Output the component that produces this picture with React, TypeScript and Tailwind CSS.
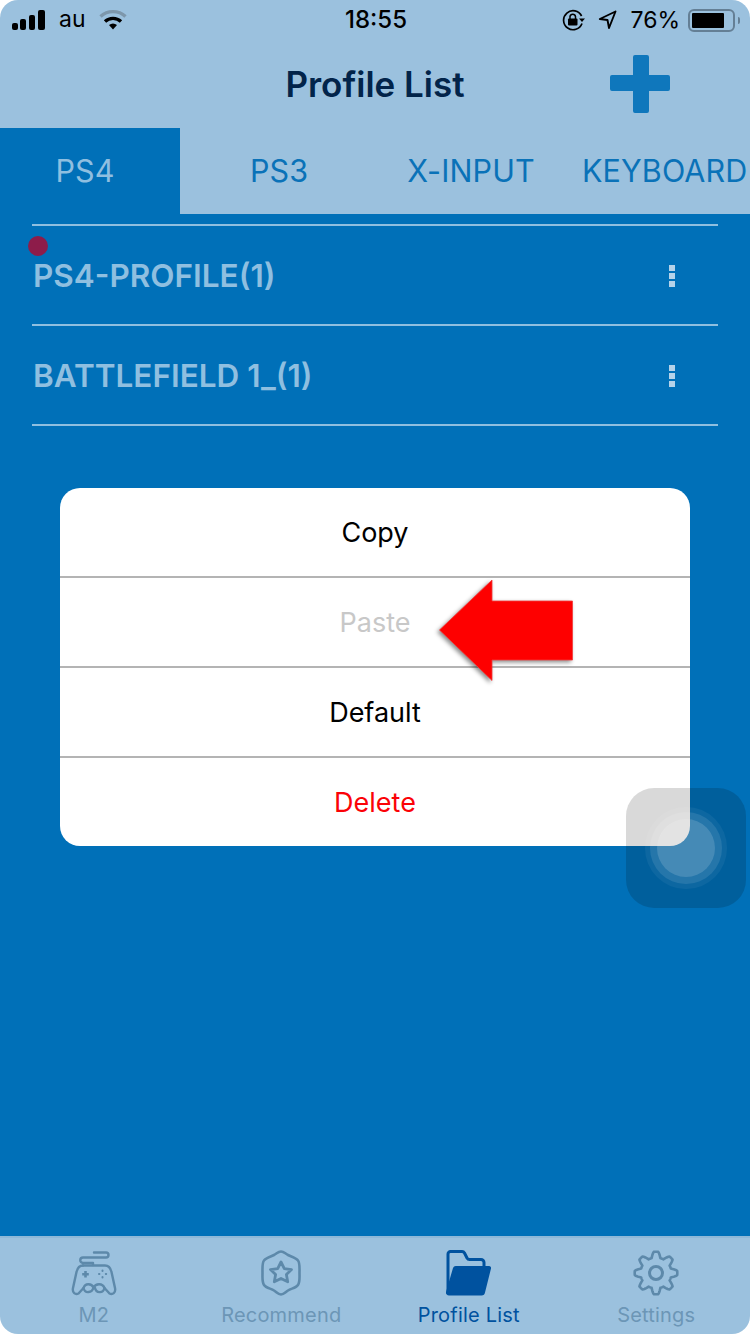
const profiles = ["PS4-PROFILE(1)", "BATTLEFIELD 1_(1)"];

const menu = [
  { label: "Copy", tone: "text-black", size: "h-[90px] border-b-2 border-[#b4b4b4]" },
  { label: "Paste", tone: "text-[#c8c8c8]", size: "h-[90px] border-b-2 border-[#b4b4b4]" },
  { label: "Default", tone: "text-black", size: "h-[90px] border-b-2 border-[#b4b4b4]" },
  { label: "Delete", tone: "text-[#fb0207]", size: "h-[88px]" },
];

// 8 rounded teeth round the settings cog
const gearPath = (() => {
  const points: string[] = [];
  for (let i = 0; i < 240; i++) {
    const a = (i / 240) * Math.PI * 2;
    const wave = Math.max(-1, Math.min(1, Math.cos(a * 8) * 1.5));
    const r = 18.4 + wave * 2.9;
    points.push(`${(23 + r * Math.sin(a)).toFixed(2)} ${(23 - r * Math.cos(a)).toFixed(2)}`);
  }
  return `M${points.join(" L")} Z`;
})();

function StatusBar() {
  return (
    <div className="grid h-10 grid-cols-3 items-center pl-3 pr-[10px] text-[23px] leading-none text-black">
      <div className="flex items-center">
        <svg width="34" height="21" viewBox="0 0 34 21" fill="currentColor">
          <rect x="0" y="13" width="6" height="7" rx="2" />
          <rect x="8" y="9" width="6" height="11" rx="2" />
          <rect x="17" y="5" width="6" height="15" rx="2" />
          <rect x="26" y="0" width="7" height="20" rx="2" />
        </svg>
        <span className="ml-[13px] -mt-[1px]">au</span>
        <svg className="ml-[13px]" width="28" height="22" viewBox="0 0 28 22" fill="none">
          <path d="M1.5 7.5 C8.5 1 19.5 1 26.5 7.5" stroke="#7d97ab" strokeWidth="3.4" />
          <path d="M6 12.5 C10.5 8.3 17.5 8.3 22 12.5" stroke="#000" strokeWidth="3.4" />
          <path d="M10 16 C12.5 14 15.5 14 18 16 L14 20.5 Z" fill="#000" />
        </svg>
      </div>
      <div className="text-center text-[24px] font-medium">18:55</div>
      <div className="flex items-center justify-end">
        <svg width="23" height="22" viewBox="0 0 23 22" fill="none">
          <path d="M20 14.5 A9.5 9.5 0 1 1 19.6 7" stroke="#000" strokeWidth="1.7" />
          <path d="M17 9.5 L23 9.5 L20 13 Z" fill="#000" />
          <rect x="6" y="9.5" width="9.5" height="7" rx="1" fill="#000" />
          <path d="M8 10 V7.5 A2.8 2.8 0 0 1 13.5 7.5 V10" stroke="#000" strokeWidth="1.5" />
        </svg>
        <svg className="ml-[13px]" width="19" height="20" viewBox="0 0 19 20" fill="none">
          <path d="M17.5 1.5 L1.8 9 L9.5 10 L11 18 Z" stroke="#000" strokeWidth="1.9" strokeLinejoin="round" />
        </svg>
        <span className="ml-[13px]">76%</span>
        <div className="ml-2 flex items-center">
          <div className="h-[23px] w-[47px] rounded-[6px] border-2 border-[#647f95] p-[2px]">
            <div className="h-full w-[32px] rounded-[1px] bg-black" />
          </div>
          <div className="ml-[3px] h-[7px] w-[2px] rounded-r-sm bg-[#647f95]" />
        </div>
      </div>
    </div>
  );
}

function Header() {
  return (
    <div className="relative flex h-[88px] items-center justify-center">
      <h1 className="text-[35px] font-semibold leading-none text-[#02244a]">Profile List</h1>
      <button type="button" className="absolute left-[610px] top-[15px]">
        <svg className="block" width="60" height="58" viewBox="0 0 60 58" fill="#0f77bc">
          <path d="M23 2 a2 2 0 0 1 2 -2 h12 a2 2 0 0 1 2 2 v18 h19 a2 2 0 0 1 2 2 v12 a2 2 0 0 1 -2 2 h-19 v20 a2 2 0 0 1 -2 2 h-12 a2 2 0 0 1 -2 -2 v-20 h-21 a2 2 0 0 1 -2 -2 v-12 a2 2 0 0 1 2 -2 h21 z" />
        </svg>
      </button>
    </div>
  );
}

function Tabs() {
  return (
    <div className="flex h-[86px] text-[30.5px] leading-none tracking-[0.1px] text-[#0a72b8]">
      <div className="flex w-[180px] items-center justify-center bg-[#0070b8] pr-[10px] text-[#8fbfe0]">PS4</div>
      <div className="flex w-[198px] items-center justify-center">PS3</div>
      <div className="flex w-[186px] items-center justify-center">X-INPUT</div>
      <div className="flex w-[186px] items-center whitespace-nowrap pl-[18px]">KEYBOARD</div>
    </div>
  );
}

function ProfileRow({ name, dot }: { name: string; dot?: boolean }) {
  return (
    <div className="relative flex h-[100px] items-center justify-between border-b-2 border-[#8fbfe0] pl-px pr-[43px] pt-[2px]">
      {dot ? <span className="absolute left-[-4px] top-[10px] size-5 rounded-full bg-[#8d1c4a]" /> : null}
      <span className="text-[31.5px] font-semibold leading-none text-[#8fbfe0]">{name}</span>
      <span className="flex flex-col gap-[2px]">
        <i className="size-[6px] bg-[#b5d3ea]" />
        <i className="size-[6px] bg-[#b5d3ea]" />
        <i className="size-[6px] bg-[#b5d3ea]" />
      </span>
    </div>
  );
}

function ContextMenu() {
  return (
    <div className="relative mx-[60px] mt-[62px] overflow-hidden rounded-[20px] bg-white">
      {menu.map((item) => (
        <div key={item.label} className={`flex items-center justify-center text-[27px] leading-none ${item.tone} ${item.size}`}>
          {item.label}
        </div>
      ))}
    </div>
  );
}

function RedArrow() {
  return (
    <svg
      className="absolute left-[436px] top-[576px] drop-shadow-[-2px_2px_2px_rgba(0,0,0,0.45)]"
      width="142"
      height="110"
      viewBox="0 0 142 110"
    >
      <path d="M3.5 54 L56 4 V25 H136.5 V84 H56 V104.5 Z" fill="#fe0000" stroke="#f23a3a" strokeWidth="0.8" />
    </svg>
  );
}

function AssistiveTouch() {
  return (
    <div className="absolute left-[626px] top-[788px] flex size-[120px] items-center justify-center rounded-[28px] bg-black/15">
      <div className="flex size-[82px] items-center justify-center rounded-full bg-white/5">
        <div className="flex size-[72px] items-center justify-center rounded-full bg-white/10">
          <div className="size-[58px] rounded-full bg-white/15" />
        </div>
      </div>
    </div>
  );
}

function GamepadIcon() {
  return (
    <svg width="46" height="46" viewBox="0 0 46 46" fill="none" stroke="#5d89aa" strokeWidth="2.4" strokeLinecap="round" strokeLinejoin="round">
      <path d="M23 2.5 H35 a2.3 2.3 0 0 1 0 5 H12 a2.4 2.4 0 0 0 0 5.5 H22 V15" />
      <path d="M12 15.5 H34 C38 15.5 39.5 18 40.5 22 L44 38 C45 43 41.5 45 38.5 43.5 L33.5 38" />
      <path d="M12 15.5 C8 15.5 6.5 18 5.5 22 L2 38 C1 43 4.5 45 7.5 43.5 L12.5 38" />
      <path d="M12.5 38 C14 33 20.5 33 22.5 37.5 C25 33 31.5 33 33.5 38 C32 44 25 43 24 38 M22.5 37.5 C21 43 14 44 12.5 38" />
      <path d="M14.5 21 V27.5 M11.2 24.2 H17.8" strokeWidth="2.6" strokeLinecap="butt" />
      <path d="M31.5 20.6 V21 M31.5 27 V27.4 M28 24 H28.4 M34.8 24 H35.2" strokeWidth="2" />
    </svg>
  );
}

function BadgeIcon() {
  return (
    <svg width="44" height="46" viewBox="0 0 44 46" fill="none" stroke="#5d89aa" strokeWidth="2.6" strokeLinejoin="round">
      <path d="M22 1.5 C25 1.5 26 3.5 29 5 C32 6.5 37 8 39 10.5 C41 13 40.5 18 40.5 23 C40.5 28 41 32 39 35 C37 38 32 38.5 29 40.5 C26 42.5 25 44.5 22 44.5 C19 44.5 18 42.5 15 40.5 C12 38.5 7 38 5 35 C3 32 3.5 28 3.5 23 C3.5 18 3 13 5 10.5 C7 8 12 6.5 15 5 C18 3.5 19 1.5 22 1.5 Z" />
      <path d="M22 12 L25.3 18.6 L32.5 19.6 L27.4 24.6 L28.7 31.8 L22 28.4 L15.3 31.8 L16.6 24.6 L11.5 19.6 L18.7 18.6 Z" strokeWidth="2.8" />
    </svg>
  );
}

function FolderIcon() {
  return (
    <svg width="45" height="46" viewBox="0 0 45 46">
      <path d="M2 44 V4 a2.5 2.5 0 0 1 2.5 -2.5 H16 a3 3 0 0 1 2.5 1.5 L21 8 a3 3 0 0 0 2.5 1.5 H35 a3 3 0 0 1 3 3 V16" fill="none" stroke="#00529f" strokeWidth="3" />
      <path d="M0 42 L7 18 a3 3 0 0 1 3 -2 H43 a2 2 0 0 1 2 2.5 L39 42.5 a3.5 3.5 0 0 1 -3.5 3 H3 a3 3 0 0 1 -3 -3.5 Z" fill="#00529f" />
    </svg>
  );
}

function GearIcon() {
  return (
    <svg width="46" height="46" viewBox="0 0 46 46" fill="none" stroke="#5d89aa" strokeWidth="2.6" strokeLinejoin="round">
      <path d={gearPath} />
      <circle cx="23" cy="23" r="6.5" strokeWidth="3" />
    </svg>
  );
}

function TabBar() {
  const items = [
    { label: "M2", icon: <GamepadIcon />, active: false },
    { label: "Recommend", icon: <BadgeIcon />, active: false },
    { label: "Profile List", icon: <FolderIcon />, active: true },
    { label: "Settings", icon: <GearIcon />, active: false },
  ];
  return (
    <div className="grid h-[98px] grid-cols-4 border-t-2 border-[#8eb8d8]">
      {items.map((item) => (
        <div key={item.label} className="flex flex-col items-center pt-[12px]">
          <div className="h-[46px]">{item.icon}</div>
          <span className={`mt-[9px] text-[20px] leading-none tracking-[0.2px] ${item.active ? "text-[#00529f]" : "text-[#6c96b6]"}`}>
            {item.label}
          </span>
        </div>
      ))}
    </div>
  );
}

export default function App() {
  return (
    <div className="h-[1334px] w-[750px] overflow-hidden bg-white font-['Inter',sans-serif]">
      <div className="relative flex h-full flex-col overflow-hidden rounded-[18px] bg-[#9bc1de]">
        <StatusBar />
        <Header />
        <Tabs />
        <main className="flex-1 bg-[#0070b8] pt-[10px]">
          <div className="mx-[32px] border-t-2 border-[#8fbfe0]">
            {profiles.map((name, i) => (
              <ProfileRow key={name} name={name} dot={i === 0} />
            ))}
          </div>
          <ContextMenu />
        </main>
        <TabBar />
        <RedArrow />
        <AssistiveTouch />
      </div>
    </div>
  );
}
